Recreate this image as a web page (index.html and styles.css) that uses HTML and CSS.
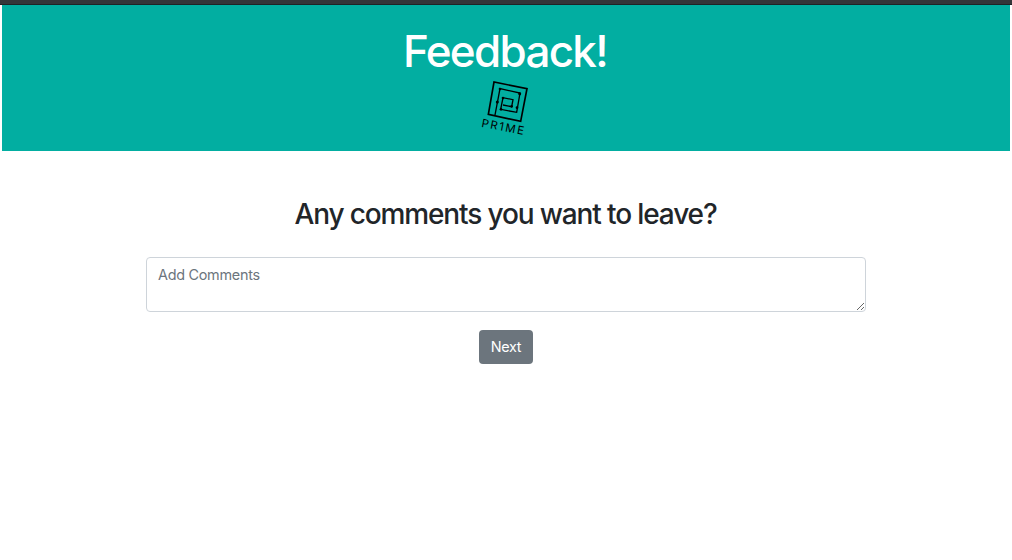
FILE: index.html
```html
<!DOCTYPE html>
<html lang="en">
<head>
<meta charset="utf-8">
<title>Feedback</title>
<link rel="stylesheet" href="styles.css">
</head>
<body>
<div class="topbar"></div>
<header class="header">
<h1 class="title">Feedback!</h1>
<svg class="logo" viewBox="0 0 180 186" role="img" aria-label="PR1ME">
<g fill="none" stroke="#000" stroke-width="4" stroke-linejoin="miter">
<path stroke-width="5" d="M40 115L57 18L156 38L137 136Z"/>
<path d="M60 117L75 38L135 51L125 109L77 100L84 65L114 71L110 92L84 87"/>
</g>
<g fill="#000"><circle cx="75" cy="39" r="4"/><circle cx="67" cy="78" r="4.5"/><circle cx="134" cy="53" r="4.5"/><circle cx="84" cy="66" r="4"/><circle cx="110" cy="91" r="4"/><circle cx="78" cy="100" r="4"/><circle cx="126" cy="95" r="4"/></g>
<text class="logo-text" transform="translate(18 152) rotate(11)" textLength="129">PR1ME</text>
</svg>
</header>
<main class="content">
<h2 class="question">Any comments you want to leave?</h2>
<textarea class="comments" placeholder="Add Comments"></textarea>
<button class="next">Next</button>
</main>
</body>
</html>
```
FILE: styles.css
```css
* { box-sizing: border-box; }
body { margin: 0; background: #fff; color: #212529; font-family: Inter, sans-serif; }
.topbar { height: 5px; background: #343639; border-bottom: 1px solid #202326; }
.header { display: flex; flex-direction: column; align-items: center; height: 146px; margin: 0 2px; padding-top: 19px; background: #02aea1; }
.title { margin: 0 2px 0 0; color: #fff; font-size: 44px; font-weight: 500; line-height: 54px; letter-spacing: -1.7px; }
.logo { display: block; width: 60px; height: 62px; margin-top: -2px; margin-left: -2px; flex: none; }
.logo-text { font: 400 34px Inter, sans-serif; }
.content { display: flex; flex-direction: column; align-items: center; padding-top: 46px; }
.question { margin: 0 1px 0 0; font-size: 28px; font-weight: 500; line-height: 34px; letter-spacing: -1.13px; }
.comments { display: block; width: 720px; height: 55px; margin: 26px 0 18px; padding: 6px 11px; border: 1px solid #ced4da; border-radius: 4px; font: 14.4px/21.6px Inter, sans-serif; letter-spacing: -0.27px; resize: vertical; outline: none; }
.comments::placeholder { color: #6c757d; opacity: 1; }
.next { width: 54px; height: 34px; padding: 0; border: 0; border-radius: 4px; background: #6c757d; color: #fff; font: 14.4px/22px Inter, sans-serif; letter-spacing: -0.3px; }
```
